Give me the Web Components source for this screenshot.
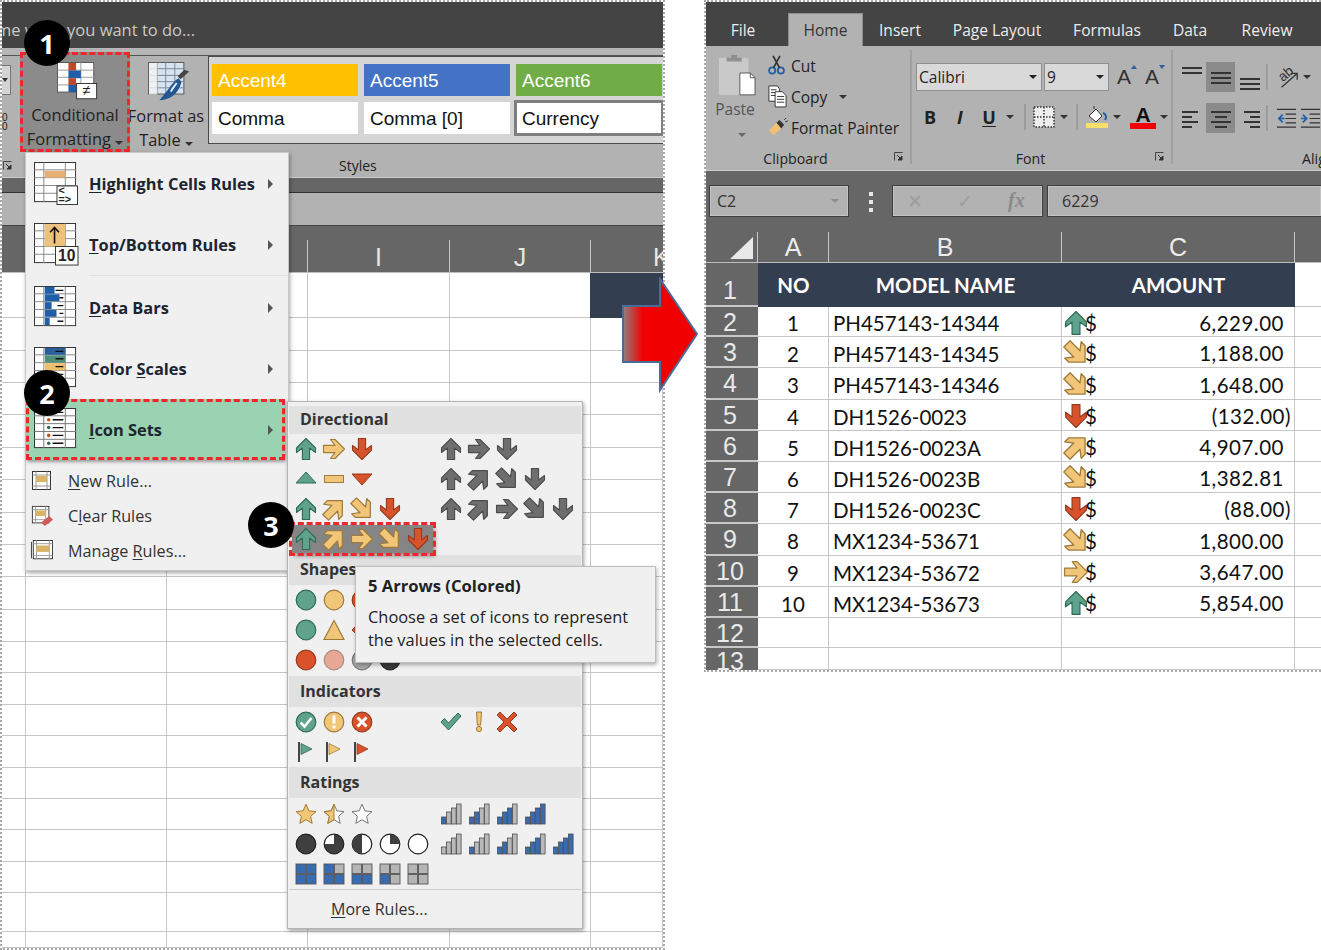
<!DOCTYPE html>
<html>
<head>
<meta charset="utf-8">
<title>Conditional formatting icon sets</title>
<style>
  html, body { margin: 0; padding: 0; background: #fff; }
  body { font-family: "Open Sans", "Noto Sans", sans-serif; }
</style>
</head>
<body>
<xl-page></xl-page>
<script>
const UI_FONT = '"Open Sans", "Noto Sans", sans-serif';
const COMMON = `
  * { box-sizing: border-box; }
  .caret { display: inline-block; width: 0; height: 0; border-left: 4px solid transparent; border-right: 4px solid transparent; border-top: 4px solid #333; }
  u { text-underline-offset: 2px; }
`;

const GREEN = ['#5fa38d', '#2f6a58'];
const YELLOW = ['#f2c679', '#9f7a3a'];
const RED = ['#d8532b', '#97391d'];
const GREY = ['#6e6e6e', '#4c4c4c'];
const BLUE = '#376cb0';

function arrow(c, rot) {
  const scale = rot % 90 ? 1.12 : 1;
  return `<g transform="rotate(${rot} 11 11) translate(11 11) scale(${scale}) translate(-11 -11)"><path d="M11 .5L20.5 10V14.5L14.6 10V21.5H7.4V10L1.5 14.5V10Z" fill="${c[0]}" stroke="${c[1]}" stroke-width="1.1" stroke-linejoin="round"/></g>`;
}
function disc(fill, stroke) {
  return `<circle cx="11" cy="11" r="9.8" fill="${fill}" stroke="${stroke}" stroke-width="1.2"/>`;
}
function bars(n) {
  const hs = [7, 12, 16, 20];
  return hs.map((h, i) => `<rect x="${1.5 + i * 5}" y="${21 - h}" width="4.6" height="${h}" fill="${i < n ? BLUE : '#b9b9b9'}" stroke="#4f4f4f" stroke-width=".8"/>`).join('');
}
function quad(on) {
  const at = [[1, 1], [11.5, 1], [1, 11.5], [11.5, 11.5]];
  return at.map((p, i) => `<rect x="${p[0]}" y="${p[1]}" width="9.5" height="9.5" fill="${on[i] ? BLUE : '#b5b5b5'}" stroke="#555" stroke-width=".9"/>`).join('');
}
function flag(c) {
  return `<rect x="3" y="1" width="2" height="20" fill="#444"/><path d="M6 2.5L17 8L6 13.5Z" fill="${c[0]}" stroke="${c[1]}" stroke-width=".8"/>`;
}
const STAR = 'M11 1.2L13.9 7.9L21 8.6L15.6 13.3L17.2 20.4L11 16.7L4.8 20.4L6.4 13.3L1 8.6L8.1 7.9Z';

const ICONS = {
  'up-g': arrow(GREEN, 0), 'right-y': arrow(YELLOW, 90), 'down-r': arrow(RED, 180),
  'ne-y': arrow(YELLOW, 45), 'se-y': arrow(YELLOW, 135),
  'up-k': arrow(GREY, 0), 'right-k': arrow(GREY, 90), 'down-k': arrow(GREY, 180),
  'ne-k': arrow(GREY, 45), 'se-k': arrow(GREY, 135),
  'tri-up': `<path d="M11 4L21 15H1Z" fill="${GREEN[0]}" stroke="${GREEN[1]}"/>`,
  'dash': `<rect x="1.5" y="7.5" width="19" height="7" fill="${YELLOW[0]}" stroke="${YELLOW[1]}"/>`,
  'tri-down': `<path d="M1 6H21L11 17Z" fill="${RED[0]}" stroke="${RED[1]}"/>`,
  'c-g': disc(GREEN[0], GREEN[1]), 'c-y': disc(YELLOW[0], YELLOW[1]), 'c-r': disc(RED[0], RED[1]),
  'c-p': disc('#e9a896', '#a88b80'), 'c-a': disc('#a8a8a8', '#777'), 'c-k': disc('#3c3c3c', '#222'),
  'tri-y': `<path d="M11 1.5L21 20.5H1Z" fill="${YELLOW[0]}" stroke="${YELLOW[1]}" stroke-width="1.2"/>`,
  'dia-r': `<path d="M11 1L21 11L11 21L1 11Z" fill="${RED[0]}" stroke="${RED[1]}"/>`,
  'ok-c': disc(GREEN[0], GREEN[1]) + '<path d="M5.5 11.5L9.5 15.5L16.5 7" fill="none" stroke="#fff" stroke-width="2.6"/>',
  'ex-c': disc(YELLOW[0], YELLOW[1]) + '<path d="M11 4.5V12.5M11 14.5V17.5" stroke="#fff" stroke-width="3"/>',
  'no-c': disc(RED[0], RED[1]) + '<path d="M6.5 6.5L15.5 15.5M15.5 6.5L6.5 15.5" stroke="#fff" stroke-width="3"/>',
  'ok': `<path d="M1 11L4.5 7.5L8.5 12L18 2L21 5L8.5 19Z" fill="${GREEN[0]}" stroke="${GREEN[1]}"/>`,
  'ex': `<path d="M8.5 1H13.5L12.7 14H9.3Z" fill="${YELLOW[0]}" stroke="${YELLOW[1]}"/><circle cx="11" cy="18" r="2.6" fill="${YELLOW[0]}" stroke="${YELLOW[1]}"/>`,
  'no': `<path d="M1 4L4 1L11 8L18 1L21 4L14 11L21 18L18 21L11 14L4 21L1 18L8 11Z" fill="${RED[0]}" stroke="${RED[1]}"/>`,
  'fl-g': flag(GREEN), 'fl-y': flag(YELLOW), 'fl-r': flag(RED),
  'st-f': `<path d="${STAR}" fill="${YELLOW[0]}" stroke="#a37a34"/>`,
  'st-h': `<path d="${STAR}" fill="#fff" stroke="#777"/><path d="M11 1.2V16.7L4.8 20.4L6.4 13.3L1 8.6L8.1 7.9Z" fill="${YELLOW[0]}" stroke="#a37a34"/>`,
  'st-e': `<path d="${STAR}" fill="#fff" stroke="#777"/>`,
  'hb-4': disc('#3f3f3f', '#222'),
  'hb-3': disc('#3f3f3f', '#222') + '<path d="M11 11V1.8A9.2 9.2 0 0 0 1.8 11Z" fill="#fff"/>',
  'hb-2': disc('#fff', '#222') + '<path d="M11 1.2A9.8 9.8 0 0 0 11 20.8Z" fill="#3f3f3f"/>',
  'hb-1': disc('#fff', '#222') + '<path d="M11 11V1.2A9.8 9.8 0 0 1 20.8 11Z" fill="#3f3f3f"/>',
  'hb-0': disc('#fff', '#222'),
  'b0': bars(0), 'b1': bars(1), 'b2': bars(2), 'b3': bars(3), 'b4': bars(4),
  'q4': quad([1, 1, 1, 1]), 'q3': quad([1, 0, 1, 1]), 'q2': quad([0, 0, 1, 1]), 'q1': quad([0, 0, 1, 0]), 'q0': quad([0, 0, 0, 0]),

  // ribbon pictures, each with its own viewBox
  'cf': [44, 40, `<rect x=".5" y=".5" width="38" height="31" fill="#fff" stroke="#555"/><path d="M13 .5V32M25 .5V32M.5 8.5H39M.5 16H39M.5 24H39" stroke="#999" fill="none"/><rect x="12" y="1" width="8" height="8" fill="#c0472a"/><rect x="12" y="9" width="13" height="8" fill="#1f5fa8"/><rect x="12" y="17" width="8" height="7" fill="#c0472a"/><rect x="12" y="24" width="8" height="7.5" fill="#1f5fa8"/><rect x="20.5" y="22.5" width="21" height="16" fill="#fff" stroke="#333"/><text x="31" y="35" font-size="15" text-anchor="middle" fill="#222" font-family="Liberation Sans">≠</text>`],
  'ft': [46, 42, `<rect x=".5" y=".5" width="37" height="33" fill="#d6e4f2" stroke="#555"/><path d="M9.5 .5V34M18.5 .5V34M28 .5V34M.5 7H38M.5 14H38M.5 20.5H38M.5 27H38" stroke="#7d8794" fill="none"/><rect x="1" y="1" width="8.5" height="33" fill="#f4f4f4" opacity=".8"/><path d="M43 10L34 18L31 15L38 8Z" fill="#444"/><path d="M32 17C26 20 24 26 12 40C22 40 32 34 35 21Z" fill="#24578f"/><path d="M30 22C28 25 25 28 24 31" stroke="#e6edf5" stroke-width="2" fill="none"/>`],
  'painter': [22, 20, `<path d="M2 13L10 5L15 11L7 18Z" fill="#f0c272"/><path d="M10 5L13 2L18 7L15 11Z" fill="#333"/><path d="M18 2L20 0M19 4L22 3" stroke="#333"/>`],
  'cut': [22, 24, `<circle cx="6" cy="18" r="3.6" fill="none" stroke="#1f5fa8" stroke-width="2"/><circle cx="16" cy="18" r="3.6" fill="none" stroke="#1f5fa8" stroke-width="2"/><path d="M7.5 15L15 1M14.5 15L7 1" stroke="#333" stroke-width="2"/>`],
  'copy': [22, 24, `<path d="M2 1H11L13 4V17H2Z" fill="#fff" stroke="#333"/><path d="M4 5H10M4 8H10M4 11H10" stroke="#333"/><path d="M8.5 7H16L20 11V23H8.5Z" fill="#fff" stroke="#333"/><path d="M10.5 12H18M10.5 15H18M10.5 18H18" stroke="#333"/>`],
  'paste': [40, 44, `<rect x="1" y="4" width="31" height="39" fill="#c9c9c9"/><path d="M9 8V4H14V1H20V4H25V8Z" fill="#8f8f8f"/><path d="M23 20H34L39 25V43H23Z" fill="#fff" stroke="#555"/><path d="M34 20V25H39" fill="none" stroke="#555"/>`],
  'launch': [9, 9, `<path d="M.5 8.5V.5H8.5" fill="none" stroke="#444"/><path d="M3 3L7 7M8 4V8H4Z" fill="#333" stroke="#333"/>`],
  'borders': [22, 22, `<rect x="1" y="1" width="20" height="20" fill="#eee"/><path d="M1 1H21V21H1ZM11 1V21M1 11H21" fill="none" stroke="#333" stroke-dasharray="1.5 1.5" stroke-width="1.5"/>`],
  'fill': [24, 24, `<path d="M9 1V4M4 11L11 4L17 11L11 17Z" fill="#fff" stroke="#333"/><path d="M18 8C21 9 22 12 20 15" fill="none" stroke="#1f5fa8" stroke-width="2"/><rect x="1" y="18" width="22" height="5" fill="#fbdf6a"/>`],
  'orient': [26, 24, `<text x="3" y="14" font-size="15" fill="#333" font-family="Liberation Sans" transform="rotate(-40 10 10)">ab</text><path d="M6 23L22 9M16 8H23V15" fill="none" stroke="#333" stroke-width="1.4"/>`],
  'indent-l': [22, 22, `<path d="M1 1.5H21M10 6.5H21M10 11H21M10 15.5H21M1 20H21" stroke="#333" stroke-width="1.3"/><path d="M7 7L3 11L7 15M3 11H9" fill="none" stroke="#1f5fa8" stroke-width="1.8"/>`],
  'indent-r': [22, 22, `<path d="M1 1.5H21M10 6.5H21M10 11H21M10 15.5H21M1 20H21" stroke="#333" stroke-width="1.3"/><path d="M3 7L7 11L3 15M7 11H1" fill="none" stroke="#1f5fa8" stroke-width="1.8"/>`],
  'm-high': [46, 44, `<rect x=".5" y=".5" width="42" height="40" fill="#fff" stroke="#333"/><path d="M10 .5V41M32 .5V41M.5 8H43M.5 16H43M.5 24H43M.5 32H43" stroke="#888" fill="none"/><rect x="11" y="9" width="21" height="7" fill="#e6b072"/><rect x="23.5" y="24.5" width="21" height="19" fill="#fff" stroke="#333"/><text x="25" y="33" font-size="11" fill="#222" font-family="Liberation Sans">&lt;</text><text x="25" y="42" font-size="11" fill="#222" font-family="Liberation Sans">=&gt;</text>`],
  'm-top': [46, 44, `<rect x=".5" y=".5" width="42" height="40" fill="#fff" stroke="#333"/><path d="M10 .5V41M32 .5V41M.5 8H43M.5 16H43M.5 24H43M.5 32H43" stroke="#888" fill="none"/><rect x="11" y="1" width="21" height="23" fill="#edc27c"/><path d="M21 21V5M16.5 9.5L21 4.5L25.5 9.5" fill="none" stroke="#111" stroke-width="1.6"/><rect x="22" y="24" width="23" height="19" fill="#fff" stroke="#333"/><text x="33.5" y="39" font-size="16" text-anchor="middle" fill="#222" font-family="Liberation Sans">10</text>`],
  'm-bars': [46, 44, `<rect x=".5" y=".5" width="42" height="40" fill="#fff" stroke="#333"/><path d="M10 .5V41M32 .5V41M.5 8H43M.5 16H43M.5 24H43M.5 32H43" stroke="#888" fill="none"/><rect x="11" y="1" width="10" height="7" fill="#1f5fa8"/><rect x="11" y="8.5" width="15" height="7" fill="#1f5fa8"/><rect x="11" y="16.5" width="7" height="7" fill="#1f5fa8"/><rect x="11" y="24.5" width="12" height="7" fill="#1f5fa8"/><rect x="11" y="32.5" width="5" height="7.5" fill="#1f5fa8"/><path d="M22 4.5H30M26 12H30M24 20H30M26 28H30M24 36H30" stroke="#111" stroke-width="1.4"/>`],
  'm-scale': [46, 44, `<rect x=".5" y=".5" width="42" height="40" fill="#fff" stroke="#333"/><path d="M10 .5V41M32 .5V41M.5 8H43M.5 16H43M.5 24H43M.5 32H43" stroke="#888" fill="none"/><rect x="11" y="1" width="21" height="7" fill="#2a5f9e"/><rect x="11" y="8.5" width="21" height="7.5" fill="#4f8e78"/><rect x="11" y="16.5" width="21" height="7.5" fill="#edbd6e"/><path d="M22 4.5H30M22 12H30M22 20H30M22 28H30" stroke="#111" stroke-width="1.4"/>`],
  'm-icons': [46, 44, `<rect x=".5" y=".5" width="42" height="40" fill="#fff" stroke="#333"/><path d="M10 .5V41M32 .5V41M.5 8H43M.5 16H43M.5 24H43M.5 32H43" stroke="#777" fill="none"/><path d="M19 4.5H30M19 12H30M19 20H30M19 28H30M19 36H30" stroke="#111" stroke-width="1.4"/><circle cx="15" cy="4.5" r="1.8" fill="#2f6a58"/><circle cx="15" cy="12" r="1.8" fill="#c0541e"/><circle cx="15" cy="20" r="1.8" fill="#2f6a58"/><circle cx="15" cy="28" r="1.8" fill="#c0541e"/><circle cx="15" cy="36" r="1.8" fill="#2f6a58"/>`],
  's-new': [22, 22, `<rect x="1.5" y="1.5" width="18" height="18" fill="#fff" stroke="#333"/><path d="M5 1.5V19.5M16 1.5V19.5M1.5 5H19.5M1.5 16H19.5" stroke="#999" fill="none"/><rect x="5" y="6" width="11" height="6" fill="#d9b467"/>`],
  's-clear': [24, 24, `<rect x="1.5" y="1.5" width="18" height="18" fill="#fff" stroke="#333"/><path d="M5 1.5V19.5M16 1.5V19.5M1.5 5H19.5M1.5 16H19.5" stroke="#999" fill="none"/><rect x="5" y="6" width="11" height="6" fill="#d9b467"/><path d="M11 19L20 12L24 16L15 23Z" fill="#cf5a5a"/>`],
  's-manage': [24, 22, `<path d="M.5 2V20" stroke="#333" fill="none"/><rect x="2.5" y=".5" width="21" height="20" fill="#fff" stroke="#333"/><path d="M6 .5V20.5M20 .5V20.5M2.5 4H23.5M2.5 17H23.5" stroke="#999" fill="none"/><rect x="6" y="6" width="14" height="7" fill="#d9b467"/>`]
};

class XlBase extends HTMLElement {
  constructor() {
    super();
    this.attachShadow({ mode: 'open' });
  }

  connectedCallback() {
    if (this._done) return;
    this._done = true;
    this.shadowRoot.innerHTML = `<style>${COMMON}${this.styles()}</style>${this.markup()}`;
  }

  styles() { return ''; }
  markup() { return '<slot></slot>'; }
}

class XlIcon extends XlBase {
  styles() {
    return ':host { display: block; line-height: 0; } svg { display: block; overflow: visible; }';
  }

  markup() {
    const def = ICONS[this.getAttribute('name')];
    const size = Number(this.getAttribute('size')) || 22;
    if (Array.isArray(def)) {
      const w = Number(this.getAttribute('w')) || def[0];
      const h = w * def[1] / def[0];
      return `<svg width="${w}" height="${h}" viewBox="0 0 ${def[0]} ${def[1]}">${def[2]}</svg>`;
    }
    return `<svg width="${size}" height="${size}" viewBox="0 0 22 22">${def}</svg>`;
  }
}

class XlBadge extends XlBase {
  styles() {
    return `:host { display: flex; width: 46px; height: 46px; border-radius: 50%; background: #000; color: #fff;
      align-items: center; justify-content: center; font: 700 27px "Open Sans", sans-serif; }`;
  }

  markup() { return `<span>${this.getAttribute('n')}</span>`; }
}

class XlShot extends XlBase {
  styles() {
    return `:host { display: block; border: 2px dotted #a8a8a8; background: #fff; overflow: hidden; position: relative; flex: none; }
      :host([side=right]) { border-right: 0; }`;
  }
}

class XlLeftRibbon extends XlBase {
  styles() {
    return `:host { display: block; color: #222; font-family: ${UI_FONT}; }
      .title { height: 46px; background: #444; color: #c9c9c9; font-size: 16.5px; padding: 17px 0 0 0; white-space: nowrap; line-height: 22px; overflow: hidden; }
      .title span { display: block; margin-left: -6px; }
      .rule { height: 8px; background: #b6b6b6; border-bottom: 1px solid #555; }
      .ribbon { height: 122px; background: #b2b2b2; border-bottom: 1px solid #cbcbcb; display: flex; flex-direction: column; }
      .tools { display: flex; height: 96px; }
      .stub { width: 18px; flex: none; padding-top: 9px; }
      .drop { width: 9px; height: 30px; background: #d4d4d4; border: 1px solid #777; border-left: 0; display: flex; align-items: center; }
      .drop .caret { margin-left: 0; border-left-width: 3px; border-right-width: 3px; }
      .zeros { font: 10px/9px "Liberation Sans", sans-serif; margin-top: 18px; padding-left: 0; }
      .big { flex: none; display: flex; flex-direction: column; align-items: center; font-size: 16.4px; line-height: 24px; }
      .cf { width: 110px; height: 100px; margin-top: -4px; background: #8b8b8b; border: 3px dashed #f0262b; padding-top: 7px; position: relative; }
      .cf xl-icon { margin-bottom: 3px; margin-left: 6px; }
      .ft { width: 76px; margin-left: -2px; margin-right: 3px; padding-top: 6px; }
      .ft xl-icon { margin-bottom: 2px; margin-left: 7px; }
      .big .lines { text-align: center; white-space: nowrap; }
      .gallery { flex: none; width: 460px; height: 88px; margin-left: 1px; background: #d5d5d5; border: 1px solid #4a4a4a; border-right: 0;
        display: grid; grid-template-columns: repeat(3, 146px); grid-auto-rows: 32px; gap: 6px; padding: 7px 0 0 3px; }
      .sty { font: 19px/33px "Liberation Sans", sans-serif; padding-left: 6px; background: #fff; color: #111; }
      .a4 { background: #ffc000; color: #fff; } .a5 { background: #4472c4; color: #fff; } .a6 { background: #70ad47; color: #fff; }
      .cur { outline: 3px solid #7f7f7f; outline-offset: -1px; }
      .labels { flex: 1; position: relative; display: flex; align-items: center; font-size: 14px; padding-left: 1px; padding-top: 1px; }
      .labels span { margin-left: 327px; }
      .strip { height: 15px; background: #666; border-bottom: 1px solid #333; }
      .formula { height: 33px; background: #b2b2b2; border-bottom: 1px solid #444; }`;
  }

  markup() {
    const cells = [['Accent4', 'a4'], ['Accent5', 'a5'], ['Accent6', 'a6'], ['Comma', ''], ['Comma [0]', ''], ['Currency', 'cur']];
    return `
      <div class="title"><span>me what you want to do...</span></div>
      <div class="rule"></div>
      <div class="ribbon">
        <div class="tools">
          <div class="stub"><div class="drop"><i class="caret"></i></div><div class="zeros">0<br>0</div></div>
          <div class="big cf"><xl-icon name="cf" w="42"></xl-icon><div class="lines">Conditional<br>Formatting <i class="caret"></i></div></div>
          <div class="big ft"><xl-icon name="ft" w="44"></xl-icon><div class="lines">Format as<br>Table <i class="caret"></i></div></div>
          <div class="gallery">${cells.map(c => `<div class="sty ${c[1]}">${c[0]}</div>`).join('')}</div>
        </div>
        <div class="labels"><xl-icon name="launch" w="9"></xl-icon><span>Styles</span></div>
      </div>
      <div class="strip"></div>
      <div class="formula"></div>`;
  }
}

class XlLeftGrid extends XlBase {
  styles() {
    const cols = [24, 141, 141, 142, 141, 72];
    const rows = [45, 33, 32, 32, 33, 32, 33, 32, 32, 33, 32, 31, 32, 31, 32, 31, 31, 32, 31, 39, 16];
    return `:host { display: block; }
      .head { display: grid; grid-template-columns: ${cols.join('px ')}px; height: 47px; background: #666; border-bottom: 1px solid #bdbdbd; }
      .head div { margin-top: 14px; border-right: 1px solid #c4c4c4; color: #e6e6e6; font: 25px/34px "Liberation Sans", sans-serif; text-align: center; }
      .head div.plain { border-right-color: transparent; }
      .head div:last-child { border: 0; text-align: left; padding-left: 62px; }
      .grid { display: grid; grid-template-columns: ${cols.join('px ')}px; grid-template-rows: ${rows.join('px ')}px; }
      .grid div { border-right: 1.5px solid #c6c6c6; border-bottom: 1.5px solid #c6c6c6; }
      .grid div.dark { background: #333f50; border: 0; margin-left: -1px; }`;
  }

  markup() {
    const head = ['', '', '', 'I', 'J', 'K'];
    let cells = '';
    for (let r = 0; r < 21; r++) {
      for (let c = 0; c < 6; c++) {
        cells += `<div class="${r === 0 && c === 5 ? 'dark' : ''}"></div>`;
      }
    }
    return `
      <div class="head">${head.map((h, i) => `<div class="${i < 2 ? 'plain' : ''}">${h}</div>`).join('')}</div>
      <div class="grid">${cells}</div>`;
  }
}

class XlRulesMenu extends XlBase {
  styles() {
    return `:host { display: block; width: 264px; height: 419px; background: #f0f0f0; border: 1px solid #c8c8c8; box-shadow: 1px 2px 4px rgba(0,0,0,.35); color: #222; font-family: ${UI_FONT}; }
      .big { display: flex; align-items: center; height: 61px; padding-left: 8px; font-weight: 700; font-size: 16.4px; color: #1c2530; position: relative; }
      .big span { margin-top: -1px; }
      .big xl-icon { width: 55px; flex: none; }
      .big i { position: absolute; left: 242px; top: 50%; margin-top: -5px; border-left: 5px solid #555; border-top: 5px solid transparent; border-bottom: 5px solid transparent; }
      .sep { height: 1px; background: #e0e0e0; margin-left: 63px; margin-bottom: 1px; }
      .on { background: #9ad3b1; outline: 3px dashed #f0262b; outline-offset: -3px; margin-right: 3px; box-shadow: 1px 2px 3px rgba(0,0,0,.35); }
      .small { display: flex; align-items: center; height: 35px; padding-left: 5px; font-size: 16.2px; color: #333; }
      .small span { margin-top: 1px; }
      .small xl-icon { width: 37px; flex: none; }
      .gap { height: 3px; }`;
  }

  markup() {
    const big = (icon, label, cls = '') => `<div class="big ${cls}"><xl-icon name="${icon}" w="45"></xl-icon><span>${label}</span><i></i></div>`;
    const small = (icon, label) => `<div class="small"><xl-icon name="${icon}" w="22"></xl-icon><span>${label}</span></div>`;
    return `
      ${big('m-high', '<u>H</u>ighlight Cells Rules')}
      ${big('m-top', '<u>T</u>op/Bottom Rules')}
      <div class="sep"></div>
      ${big('m-bars', '<u>D</u>ata Bars')}
      ${big('m-scale', 'Color <u>S</u>cales')}
      ${big('m-icons', '<u>I</u>con Sets', 'on')}
      <div class="gap"></div>
      ${small('s-new', '<u>N</u>ew Rule...')}
      ${small('s-clear', 'C<u>l</u>ear Rules')}
      ${small('s-manage', 'Manage <u>R</u>ules...')}`;
  }
}

class XlIconMenu extends XlBase {
  styles() {
    return `:host { display: block; width: 296px; height: 528px; background: #f0f0f0; border: 1px solid #b4b4b4; box-shadow: 1px 2px 4px rgba(0,0,0,.35); padding: 4px 1px 0; color: #333; font-family: ${UI_FONT}; }
      .hd { background: #e1e1e1; font-weight: 700; font-size: 16px; padding-left: 11px; padding-bottom: 2px; display: flex; align-items: center; }
      .row { display: flex; height: 30px; padding-left: 3px; }
      .set { display: grid; grid-template-columns: repeat(5, 28px); width: 147px; align-items: center; justify-items: center; }
      .hot { background: #858585; width: 143px; height: 28px; margin: 1px 4px 0 0; outline: 3px dashed #f0262b; box-shadow: 2px 3px 4px rgba(0,0,0,.4); }
      .tight { margin-top: -1px; height: 31px; }
      .sep { height: 1px; background: #cfcfcf; margin-top: 0; }
      .more { padding: 8px 0 0 42px; font-size: 16px; color: #333; line-height: 22px; }`;
  }

  markup() {
    const cell = n => `<xl-icon name="${n}"></xl-icon>`;
    const set = (list, cls = '') => `<div class="set ${cls}">${list ? list.split(' ').map(cell).join('') : ''}</div>`;
    const row = (a, b, cls, rowCls = '') => `<div class="row ${rowCls}">${set(a, cls)}${set(b)}</div>`;
    const hd = (t, h, top = 0) => `<div class="hd" style="height:${h}px;margin-top:${top}px">${t}</div>`;
    return `
      ${hd('Directional', 28)}
      ${row('up-g right-y down-r', 'up-k right-k down-k')}
      ${row('tri-up dash tri-down', 'up-k ne-k se-k down-k')}
      ${row('up-g ne-y se-y down-r', 'up-k ne-k right-k se-k down-k')}
      ${row('up-g ne-y right-y se-y down-r', '', 'hot')}
      ${hd('Shapes', 30, 1)}
      ${row('c-g c-y c-r', '')}
      ${row('c-g tri-y dia-r', '')}
      ${row('c-r c-p c-a c-k', '')}
      ${hd('Indicators', 31, 1)}
      ${row('ok-c ex-c no-c', 'ok ex no')}
      ${row('fl-g fl-y fl-r', '')}
      ${hd('Ratings', 31)}
      <div style="height:1px"></div>
      ${row('st-f st-h st-e', 'b1 b2 b3 b4')}
      ${row('hb-4 hb-3 hb-2 hb-1 hb-0', 'b0 b1 b2 b3 b4')}
      ${row('q4 q3 q2 q1 q0', '', '', 'tight')}
      <div class="sep"></div>
      <div class="more"><u>M</u>ore Rules...</div>`;
  }
}

class XlTip extends XlBase {
  styles() {
    return `:host { display: block; width: 301px; height: 97px; background: #f0f0f0; border: 1px solid #bdbdbd; box-shadow: 1px 2px 4px rgba(0,0,0,.3); padding: 7px 12px; color: #222; font-family: ${UI_FONT}; font-size: 16.4px; line-height: 23px; white-space: nowrap; }
      b { display: block; margin-bottom: 8px; font-size: 16.6px; }`;
  }

  markup() {
    return '<b>5 Arrows (Colored)</b>Choose a set of icons to represent<br>the values in the selected cells.';
  }
}

class XlBigArrow extends XlBase {
  styles() {
    return ':host { display: block; width: 78px; height: 116px; } svg { display: block; }';
  }

  markup() {
    return `<svg width="78" height="116" viewBox="0 0 78 116">
      <defs><linearGradient id="fade" x1="0" x2="1" y1="0" y2="0">
        <stop offset="0" stop-color="#8f8080"/><stop offset=".27" stop-color="#f00000"/><stop offset="1" stop-color="#f00000"/>
      </linearGradient></defs>
      <path d="M2 29H39V2L76 57L39 113V85H2Z" fill="url(#fade)" stroke="#4b6c96" stroke-width="2"/>
    </svg>`;
  }
}

class XlRightRibbon extends XlBase {
  styles() {
    return `:host { display: block; color: #222; font-family: ${UI_FONT}; }
      .tabs { display: flex; height: 44px; background: #444; color: #ececec; font-size: 15.6px; padding-top: 11px; line-height: 35px; text-align: center; }
      .tabs div { flex: none; }
      .tabs .home { background: #b2b2b2; color: #333; border: 1px solid #8d8d8d; border-bottom: 0; line-height: 32px; }
      .ribbon { height: 125px; background: #b2b2b2; border-bottom: 1px solid #cbcbcb; display: flex; }
      .grp { flex: none; display: flex; flex-direction: column; border-right: 2px solid #a0a0a0; margin: 4px 0 6px; position: relative; }
      .body { height: 94px; flex: none; }
      .foot { flex: none; height: 20px; font-size: 14.2px; text-align: center; position: relative; line-height: 17px; padding: 6px 25px 0 0; }
      .foot xl-icon { position: absolute; right: 7px; top: 8px; }
      .clip { width: 206px; }
      .clip .body { display: flex; }
      .paste { width: 61px; flex: none; padding: 4px 0 0 12px; font-size: 15.5px; color: #555; text-align: center; line-height: 22px; }
      .paste span { display: block; margin-left: -14px; width: 62px; margin-top: 2px; }
      .paste .caret { margin-left: -2px; border-top-color: #666; }
      .acts { display: flex; flex-direction: column; margin-top: 0; font-size: 15.5px; }
      .act { display: flex; align-items: center; height: 31px; gap: 2px; white-space: nowrap; }
      .act xl-icon { width: 22px; flex: none; }
      .act .caret { margin-left: 10px; }
      .font { width: 261px; padding-left: 3px; }
      .frow { display: flex; align-items: center; }
      .box { height: 28px; background: #d9d9d9; border: 1px solid #8f8f8f; font-size: 15.5px; line-height: 26px; padding-left: 2px; position: relative; }
      .box .caret { position: absolute; right: 4px; top: 11px; border-top-color: #222; }
      .f1 { width: 126px; margin-left: 1px; } .f2 { width: 65px; margin-left: 2px; }
      .grow { font: 21px/26px "Liberation Sans", sans-serif; color: #333; width: 28px; text-align: center; position: relative; }
      .grow i { position: absolute; right: 1px; top: 1px; border-left: 3px solid transparent; border-right: 3px solid transparent; border-bottom: 4px solid #2a5f9e; }
      .grow i.dn { border-bottom: 0; border-top: 4px solid #2a5f9e; }
      .f-row2 { margin-top: 10px; height: 32px; }
      .fmt { width: 30px; text-align: center; font: 700 18px/28px ${UI_FONT}; }
      .vsep { width: 2px; height: 26px; background: #9c9c9c; flex: none; }
      .fbtn { display: flex; justify-content: center; flex: none; }
      .fcol { width: 26px; text-align: center; font: 700 21px/19px "Liberation Sans", sans-serif; color: #111; border-bottom: 6px solid #f00000; height: 24px; flex: none; }
      .align { flex: 1; padding-left: 4px; min-width: 0; }
      .arow { display: flex; align-items: center; height: 30px; }
      .cellb { width: 29px; height: 30px; display: flex; justify-content: center; flex: none; }
      .cellb.on { background: #8b8b8b; }
      .lines { width: 20px; display: flex; flex-direction: column; gap: 3.5px; }
      .lines b { display: block; height: 1.5px; background: #333; }
      .a-row2 { margin-top: 11px; }
      .foot-a { text-align: left; height: 24px; padding: 6px 0 0 125px; white-space: nowrap; overflow: hidden; }
      .bar { height: 61px; background: #666; display: flex; padding: 14px 0 0 3px; align-items: flex-start; }
      .fb { height: 32px; background: #b2b2b2; border: 1px solid #3e3e3e; box-shadow: inset 0 0 0 1px #c4c4c4; font-size: 16px; line-height: 30px; color: #333; flex: none; }
      .name { width: 140px; padding-left: 7px; position: relative; }
      .name .caret { position: absolute; right: 9px; top: 13px; border-top-color: #8d8d8d; }
      .dots { width: 43px; flex: none; display: flex; flex-direction: column; gap: 4px; align-items: center; padding-top: 7px; }
      .dots b { width: 4px; height: 4px; background: #e6e6e6; display: block; }
      .fxs { width: 151px; display: flex; color: #9d9d9d; font-size: 19px; padding-left: 14px; }
      .fxs span { width: 50px; flex: none; }
      .fxs em { font: italic 700 20px/28px "Liberation Serif", serif; color: #8a8a8a; margin-left: 1px; }
      .val { flex: 1; margin-left: 4px; padding-left: 14px; border-right: 0; }`;
  }

  markup() {
    const tabs = [['File', 82, '', 8], ['Home', 75, 'home', 0], ['Insert', 74, '', 0], ['Page Layout', 120, '', 0], ['Formulas', 100, '', 0], ['Data', 66, '', 0], ['Review', 88, '', 0]];
    const lines = list => `<div class="lines" style="padding-top:${list[0]}px">${list[1].map(w => `<b style="width:${w}px;${list[2] === 'c' ? 'margin:0 auto' : list[2] === 'r' ? 'margin-left:auto' : ''}"></b>`).join('')}</div>`;
    return `
      <div class="tabs">${tabs.map(t => `<div class="${t[2]}" style="width:${t[1]}px;${t[3] ? `padding-right:${t[3]}px` : ''}">${t[0]}</div>`).join('')}</div>
      <div class="ribbon">
        <div class="grp clip">
          <div class="body">
            <div class="paste"><xl-icon name="paste" w="38"></xl-icon><span>Paste</span><i class="caret"></i></div>
            <div class="acts">
              <div class="act"><xl-icon name="cut" w="19"></xl-icon><span>Cut</span></div>
              <div class="act"><xl-icon name="copy" w="21"></xl-icon><span>Copy</span><i class="caret"></i></div>
              <div class="act"><xl-icon name="painter" w="21"></xl-icon><span>Format Painter</span></div>
            </div>
          </div>
          <div class="foot">Clipboard<xl-icon name="launch" w="9"></xl-icon></div>
        </div>
        <div class="grp font">
          <div class="body">
            <div class="frow" style="padding-top:13px">
              <div class="box f1">Calibri<i class="caret"></i></div><div class="box f2">9<i class="caret"></i></div>
              <div class="grow" style="margin-left:1px">A<i></i></div><div class="grow">A<i class="dn"></i></div>
            </div>
            <div class="frow f-row2">
              <div class="fmt">B</div><div class="fmt"><i>I</i></div><div class="fmt" style="width:28px"><u>U</u></div>
              <i class="caret" style="margin:0 4px 0 3px"></i><div style="width:6px"></div><div class="vsep"></div>
              <div class="fbtn" style="width:36px"><xl-icon name="borders" w="22"></xl-icon></div><i class="caret" style="margin-left:-2px"></i>
              <div style="width:8px"></div><div class="vsep"></div>
              <div class="fbtn" style="width:38px"><xl-icon name="fill" w="24"></xl-icon></div><i class="caret" style="margin-left:-3px"></i>
              <div style="width:9px"></div><div class="fcol">A</div><i class="caret" style="margin-left:4px"></i>
            </div>
          </div>
          <div class="foot">Font<xl-icon name="launch" w="9"></xl-icon></div>
        </div>
        <div class="grp align" style="border:0">
          <div class="body">
            <div class="arow" style="margin-top:12px">
              <div class="cellb">${lines([5, [20, 20]])}</div>
              <div class="cellb on">${lines([10, [20, 20, 20]])}</div>
              <div class="cellb">${lines([16, [20, 20, 20]])}</div>
              <div class="vsep" style="margin:0 8px 0 2px"></div>
              <xl-icon name="orient" w="24"></xl-icon><i class="caret" style="margin-left:3px"></i>
            </div>
            <div class="arow a-row2">
              <div class="cellb">${lines([8, [16, 10, 16, 10]])}</div>
              <div class="cellb on">${lines([8, [20, 12, 20, 12], 'c'])}</div>
              <div class="cellb">${lines([8, [16, 10, 16, 10], 'r'])}</div>
              <div class="vsep" style="margin:0 8px 0 2px"></div>
              <xl-icon name="indent-l" w="21"></xl-icon><div style="width:8px"></div><xl-icon name="indent-r" w="21"></xl-icon>
            </div>
          </div>
          <div class="foot foot-a">Alignment</div>
        </div>
      </div>
      <div class="bar">
        <div class="fb name">C2<i class="caret"></i></div>
        <div class="dots"><b></b><b></b><b></b></div>
        <div class="fb fxs"><span>✕</span><span>✓</span><em>fx</em></div>
        <div class="fb val">6229</div>
      </div>`;
  }
}

class XlTable extends XlBase {
  styles() {
    const cols = '52px 71px 233px 233px 26px';
    const rows = [44, 30, 31, 32, 31, 31, 31, 31, 32, 31, 31, 30, 22];
    return `:host { display: block; font: 20.5px "Lato", sans-serif; color: #111; }
      .head { display: grid; grid-template-columns: ${cols}; height: 31px; background: #666; border-bottom: 1.5px solid #bdbdbd; }
      .head div { border-right: 1.5px solid #c4c4c4; color: #ececec; font: 25px/30px "Liberation Sans", sans-serif; text-align: center; }
      .head div:last-child { border: 0; }
      .head svg { display: block; margin: 5px 0 0 24px; }
      .grid { display: grid; grid-template-columns: ${cols}; grid-template-rows: ${rows.join('px ')}px; }
      .n { background: #666; color: #e9e9e9; border-bottom: 2px solid #c8c8c8; font: 25px/30px "Liberation Sans", sans-serif; text-align: center; padding-right: 4px; overflow: hidden; }
      .n.first { padding-top: 12px; }
      .n.last { line-height: 27px; border-bottom: 0; }
      .c { border-right: 1.5px solid #c6c6c6; border-bottom: 1.5px solid #c6c6c6; display: flex; align-items: center; white-space: nowrap; overflow: hidden; padding-top: 3px; }
      .no { justify-content: center; }
      .model { padding-left: 4px; }
      .h { background: #333f50; color: #fff; font-weight: 700; border: 0; justify-content: center; padding-top: 0; padding-bottom: 1px; }
      .amt { padding: 2px 3px 0 2px; }
      .amt xl-icon { flex: none; }
      .amt .d { margin-left: -3px; }
      .amt .v { margin-left: auto; letter-spacing: .5px; }
      .amt .p { padding-right: 7px; }`;
  }

  markup() {
    const data = [
      ['1', 'PH457143-14344', 'up-g', '6,229.00'], ['2', 'PH457143-14345', 'se-y', '1,188.00'],
      ['3', 'PH457143-14346', 'se-y', '1,648.00'], ['4', 'DH1526-0023', 'down-r', '(132.00)'],
      ['5', 'DH1526-0023A', 'ne-y', '4,907.00'], ['6', 'DH1526-0023B', 'se-y', '1,382.81'],
      ['7', 'DH1526-0023C', 'down-r', '(88.00)'], ['8', 'MX1234-53671', 'se-y', '1,800.00'],
      ['9', 'MX1234-53672', 'right-y', '3,647.00'], ['10', 'MX1234-53673', 'up-g', '5,854.00']
    ];
    let cells = `<div class="n first">1</div><div class="c h">NO</div><div class="c h">MODEL NAME</div><div class="c h">AMOUNT</div><div class="c" style="border-right:0"></div>`;
    data.forEach((d, i) => {
      const plain = d[3][0] === '(' ? '' : 'p';
      cells += `<div class="n">${i + 2}</div><div class="c no">${d[0]}</div><div class="c model">${d[1]}</div>
        <div class="c amt"><xl-icon name="${d[2]}" size="24"></xl-icon><span class="d">$</span><span class="v ${plain}">${d[3]}</span></div><div class="c" style="border-right:0"></div>`;
    });
    [12, 13].forEach((n) => {
      cells += `<div class="n ${n === 13 ? 'last' : ''}">${n}</div><div class="c"></div><div class="c"></div><div class="c"></div><div class="c" style="border-right:0"></div>`;
    });
    return `
      <div class="head"><div><svg width="24" height="22"><path d="M23 0V22H0Z" fill="#e9e9e9"/></svg></div><div>A</div><div>B</div><div>C</div><div></div></div>
      <div class="grid">${cells}</div>`;
  }
}

class XlPage extends XlBase {
  styles() {
    return `:host { display: flex; align-items: flex-start; width: 1321px; height: 950px; position: relative; overflow: hidden; }
      .left { width: 665px; height: 950px; border-bottom-width: 2px; }
      .right { width: 617px; height: 672px; margin-left: 39px; }
      .over { position: absolute; }
      .m1 { left: 23px; top: 150px; }
      .m2 { left: 285px; top: 399px; }
      .tip { left: 353px; top: 564px; }
      .b1 { left: 22px; top: 18px; }
      .b2 { left: 22px; top: 368px; }
      .b3 { left: 246px; top: 500px; }
      .arrow { left: 621px; top: 277px; z-index: 3; }`;
  }

  markup() {
    return `
      <xl-shot class="left">
        <xl-left-ribbon></xl-left-ribbon>
        <xl-left-grid></xl-left-grid>
        <xl-rules-menu class="over m1"></xl-rules-menu>
        <xl-icon-menu class="over m2"></xl-icon-menu>
        <xl-tip class="over tip"></xl-tip>
        <xl-badge class="over b1" n="1"></xl-badge>
        <xl-badge class="over b2" n="2"></xl-badge>
        <xl-badge class="over b3" n="3"></xl-badge>
      </xl-shot>
      <xl-shot class="right" side="right">
        <xl-right-ribbon></xl-right-ribbon>
        <xl-table></xl-table>
      </xl-shot>
      <xl-big-arrow class="over arrow"></xl-big-arrow>`;
  }
}

customElements.define('xl-icon', XlIcon);
customElements.define('xl-badge', XlBadge);
customElements.define('xl-shot', XlShot);
customElements.define('xl-left-ribbon', XlLeftRibbon);
customElements.define('xl-left-grid', XlLeftGrid);
customElements.define('xl-rules-menu', XlRulesMenu);
customElements.define('xl-icon-menu', XlIconMenu);
customElements.define('xl-tip', XlTip);
customElements.define('xl-big-arrow', XlBigArrow);
customElements.define('xl-right-ribbon', XlRightRibbon);
customElements.define('xl-table', XlTable);
customElements.define('xl-page', XlPage);
</script>
</body>
</html>
